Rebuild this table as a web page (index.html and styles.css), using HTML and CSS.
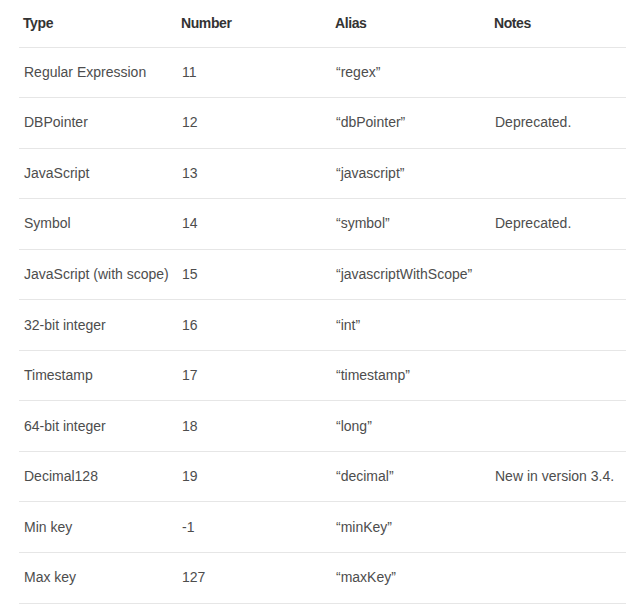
FILE: index.html
```html
<!DOCTYPE html>
<html>
<head>
<meta charset="utf-8">
<link rel="stylesheet" href="styles.css">
</head>
<body>
<table class="types">
  <colgroup>
    <col class="c1"><col class="c2"><col class="c3"><col class="c4">
  </colgroup>
  <thead>
    <tr><th>Type</th><th>Number</th><th>Alias</th><th>Notes</th></tr>
  </thead>
  <tbody>
    <tr><td>Regular Expression</td><td>11</td><td>“regex”</td><td></td></tr>
    <tr><td>DBPointer</td><td>12</td><td>“dbPointer”</td><td>Deprecated.</td></tr>
    <tr><td>JavaScript</td><td>13</td><td>“javascript”</td><td></td></tr>
    <tr><td>Symbol</td><td>14</td><td>“symbol”</td><td>Deprecated.</td></tr>
    <tr><td>JavaScript (with scope)</td><td>15</td><td>“javascriptWithScope”</td><td></td></tr>
    <tr><td>32-bit integer</td><td>16</td><td>“int”</td><td></td></tr>
    <tr><td>Timestamp</td><td>17</td><td>“timestamp”</td><td></td></tr>
    <tr><td>64-bit integer</td><td>18</td><td>“long”</td><td></td></tr>
    <tr><td>Decimal128</td><td>19</td><td>“decimal”</td><td>New in version 3.4.</td></tr>
    <tr><td>Min key</td><td>-1</td><td>“minKey”</td><td></td></tr>
    <tr><td>Max key</td><td>127</td><td>“maxKey”</td><td></td></tr>
  </tbody>
</table>
</body>
</html>
```
FILE: styles.css
```css
html, body {
  margin: 0;
  padding: 0;
  background: #fff;
}
body {
  font-family: "Liberation Sans", Arial, sans-serif;
  font-size: 14px;
  color: #4d4d4d;
  overflow: hidden;
}
.types {
  margin-left: 19px;
  width: 620px;
  border-collapse: collapse;
  table-layout: fixed;
}
.c1 { width: 158px; }
.c2 { width: 154px; }
.c3 { width: 159px; }
.c4 { width: 149px; }
.types th {
  text-align: left;
  font-weight: bold;
  color: #333;
  height: 47px;
  padding: 0 5px 1px 4px;
  box-sizing: border-box;
  vertical-align: middle;
  border-bottom: 1px solid #e6e6e6;
  letter-spacing: -0.4px;
}
.types td {
  height: 50.55px;
  padding: 0 5px 1px 5px;
  box-sizing: border-box;
  vertical-align: middle;
  border-bottom: 1px solid #e6e6e6;
  white-space: nowrap;
}
```
